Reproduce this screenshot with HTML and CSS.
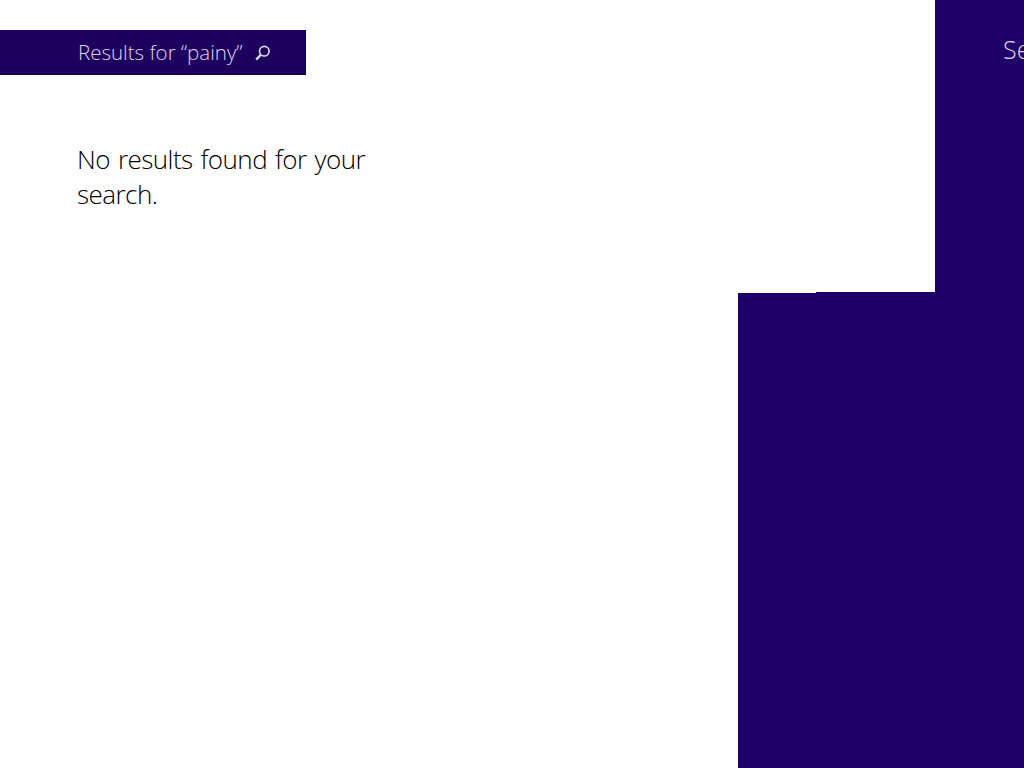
FILE: index.html
```html
<!DOCTYPE html>
<html lang="en">
<head>
<meta charset="utf-8">
<title>Search results</title>
<link rel="stylesheet" href="styles.css">
</head>
<body>
<div class="screen">
  <main class="results">
    <div class="results-bar">
      <span class="results-title">Results for “painy”</span>
      <svg class="search-icon" width="16" height="16" viewBox="0 0 16 16" aria-hidden="true">
        <circle cx="9.3" cy="6.2" r="4.8" fill="none" stroke="#e0d4f0" stroke-width="1.7"/>
        <path d="M5.8 9.7 1.2 14.6" fill="none" stroke="#e0d4f0" stroke-width="2.4"/>
      </svg>
    </div>
    <p class="no-results">No results found for your search.</p>
  </main>
  <aside class="side">
    <div class="side-top">
      <div class="charm"><span class="charm-title">Search</span></div>
    </div>
    <div class="side-lip"></div>
    <div class="side-bottom"></div>
  </aside>
</div>
</body>
</html>
```
FILE: styles.css
```css
html, body {
  margin: 0;
  padding: 0;
  background: #fff;
}

.screen {
  display: flex;
  width: 1024px;
  height: 768px;
  overflow: hidden;
  font-family: "Open Sans", "Noto Sans", sans-serif;
}

.results {
  width: 738px;
  flex: none;
  padding-top: 30px;
  box-sizing: border-box;
}

.results-bar {
  display: flex;
  align-items: center;
  gap: 13px;
  width: 306px;
  height: 45px;
  padding-left: 78px;
  box-sizing: border-box;
  background: #1d005e;
}

.results-title {
  padding-bottom: 2px;
  font-size: 20.5px;
  font-weight: 300;
  color: #e0d4f0;
  white-space: nowrap;
}

.search-icon {
  flex: none;
}

.no-results {
  width: 310px;
  margin: 67px 0 0 77px;
  font-size: 26px;
  font-weight: 300;
  line-height: 35px;
  letter-spacing: -0.55px;
  word-spacing: 1.8px;
  color: #000;
}

.side {
  width: 286px;
  flex: none;
  display: flex;
  flex-direction: column;
}

.side-top {
  display: flex;
  justify-content: flex-end;
  height: 292px;
  flex: none;
}

.charm {
  width: 89px;
  padding: 31px 0 0 68px;
  box-sizing: border-box;
  background: #1f0068;
  overflow: hidden;
}

.charm-title {
  font-size: 25px;
  font-weight: 300;
  line-height: 36px;
  color: #e0d4f0;
}

.side-lip {
  height: 1px;
  flex: none;
  margin-left: 78px;
  background: #1f0068;
}

.side-bottom {
  flex: 1;
  background: #1f0068;
}
```
